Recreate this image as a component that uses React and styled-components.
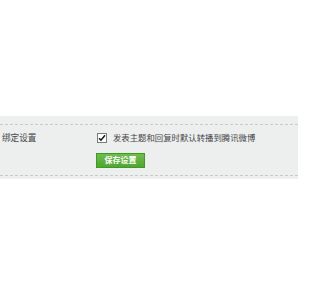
import React from 'react';
import styled, { createGlobalStyle } from 'styled-components';

const GlobalStyle = createGlobalStyle`
    body {
        margin: 0;
        background: #fff;
        font-family: "Liberation Sans", "Noto Sans CJK SC", sans-serif;
    }
`;

const Page = styled.div`
    padding-top: 116px;
    width: 300px;
`;

const Panel = styled.div`
    width: 298px;
    background: #edefef;
    padding: 8px 0 3px;
`;

const Row = styled.div`
    display: flex;
    border-top: 1px dashed #c6c9c9;
    border-bottom: 1px dashed #c6c9c9;
    padding: 7px 0 7px;
`;

const Label = styled.div`
    width: 95px;
    padding-left: 2px;
    font-size: 8.6px;
    line-height: 12px;
    color: #444;
`;

const Field = styled.div`
    display: flex;
    flex-direction: column;
    align-items: flex-start;
    gap: 9px;
`;

const Check = styled.label`
    display: flex;
    align-items: center;
    gap: 6px;
    font-size: 8.4px;
    line-height: 12px;
    color: #444;
`;

const Box = styled.span`
    display: flex;
    align-items: center;
    justify-content: center;
    width: 8px;
    height: 8px;
    border: 1px solid #7a7a7a;
    background: #fff;
`;

const SaveButton = styled.button`
    width: 49px;
    height: 15px;
    margin-left: -1px;
    padding: 0;
    border: 1px solid #3f9a24;
    background: linear-gradient(#6cbf4a, #4ea72f);
    color: #fff;
    font-family: "Liberation Sans", "Noto Sans CJK SC", sans-serif;
    font-size: 8px;
    font-weight: bold;
    line-height: 13px;
    cursor: pointer;
`;

const App = () => (
    <Page>
        <GlobalStyle />
        <Panel>
            <Row>
                <Label>绑定设置</Label>
                <Field>
                    <Check>
                        <Box>
                            <svg width="8" height="8" viewBox="0 0 8 8">
                                <path d="M1 4.2 L3 6.3 L7 1.2" fill="none" stroke="#111" strokeWidth="1.4" />
                            </svg>
                        </Box>
                        发表主题和回复时默认转播到腾讯微博
                    </Check>
                    <SaveButton>保存设置</SaveButton>
                </Field>
            </Row>
        </Panel>
    </Page>
);

export default App;
